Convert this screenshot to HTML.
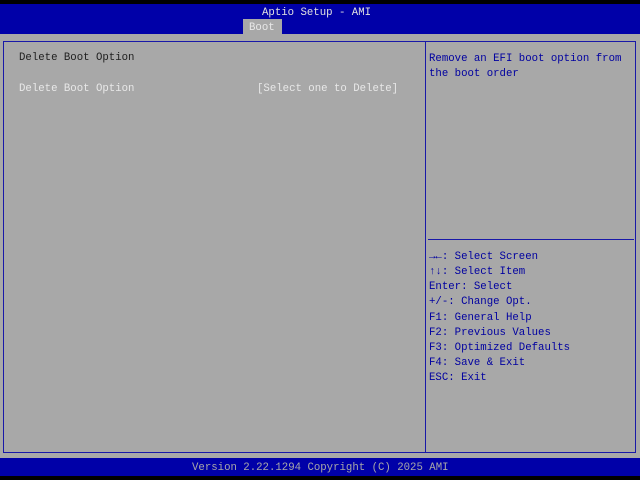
<!DOCTYPE html><html><head><style>
body{margin:0;width:640px;height:480px;background:#000;position:relative;overflow:hidden;font-family:"Liberation Mono","DejaVu Sans Mono",monospace;font-size:10.7px}
div{position:absolute}
.t{white-space:pre;line-height:12px}
</style></head><body>
<div style="left:0;top:4px;width:640px;height:30px;background:#0000a8"></div>
<div class="t" style="left:262px;top:7px;color:#e0e0e0">Aptio Setup - AMI</div>
<div style="left:243px;top:19px;width:39px;height:15px;background:#a8a8a8"></div>
<div class="t" style="left:249px;top:22px;color:#e8e8e8">Boot</div>
<div style="left:0;top:34px;width:640px;height:424px;background:#a8a8a8"></div>
<div style="left:3px;top:41px;width:631px;height:410px;border:1px solid #1818a8"></div>
<div style="left:425px;top:41px;width:1px;height:411px;background:#1818a8"></div>
<div style="left:428px;top:239px;width:206px;height:1px;background:#1818a8"></div>
<div class="t" style="left:19px;top:52px;color:#202020">Delete Boot Option</div>
<div class="t" style="left:19px;top:83px;color:#e8e8e8">Delete Boot Option</div>
<div class="t" style="left:257px;top:83px;color:#e8e8e8">[Select one to Delete]</div>
<div class="t" style="left:429px;top:52px;color:#0000a0;line-height:15.2px">Remove an EFI boot option from
the boot order</div>
<div class="t" style="left:429px;top:250px;color:#0000a0;line-height:15.15px">→←: Select Screen
↑↓: Select Item
Enter: Select
+/-: Change Opt.
F1: General Help
F2: Previous Values
F3: Optimized Defaults
F4: Save &amp; Exit
ESC: Exit</div>
<div style="left:0;top:458px;width:640px;height:18px;background:#0000a8"></div>
<div class="t" style="left:192px;top:462px;color:#a8a8a8">Version 2.22.1294 Copyright (C) 2025 AMI</div>
</body></html>
